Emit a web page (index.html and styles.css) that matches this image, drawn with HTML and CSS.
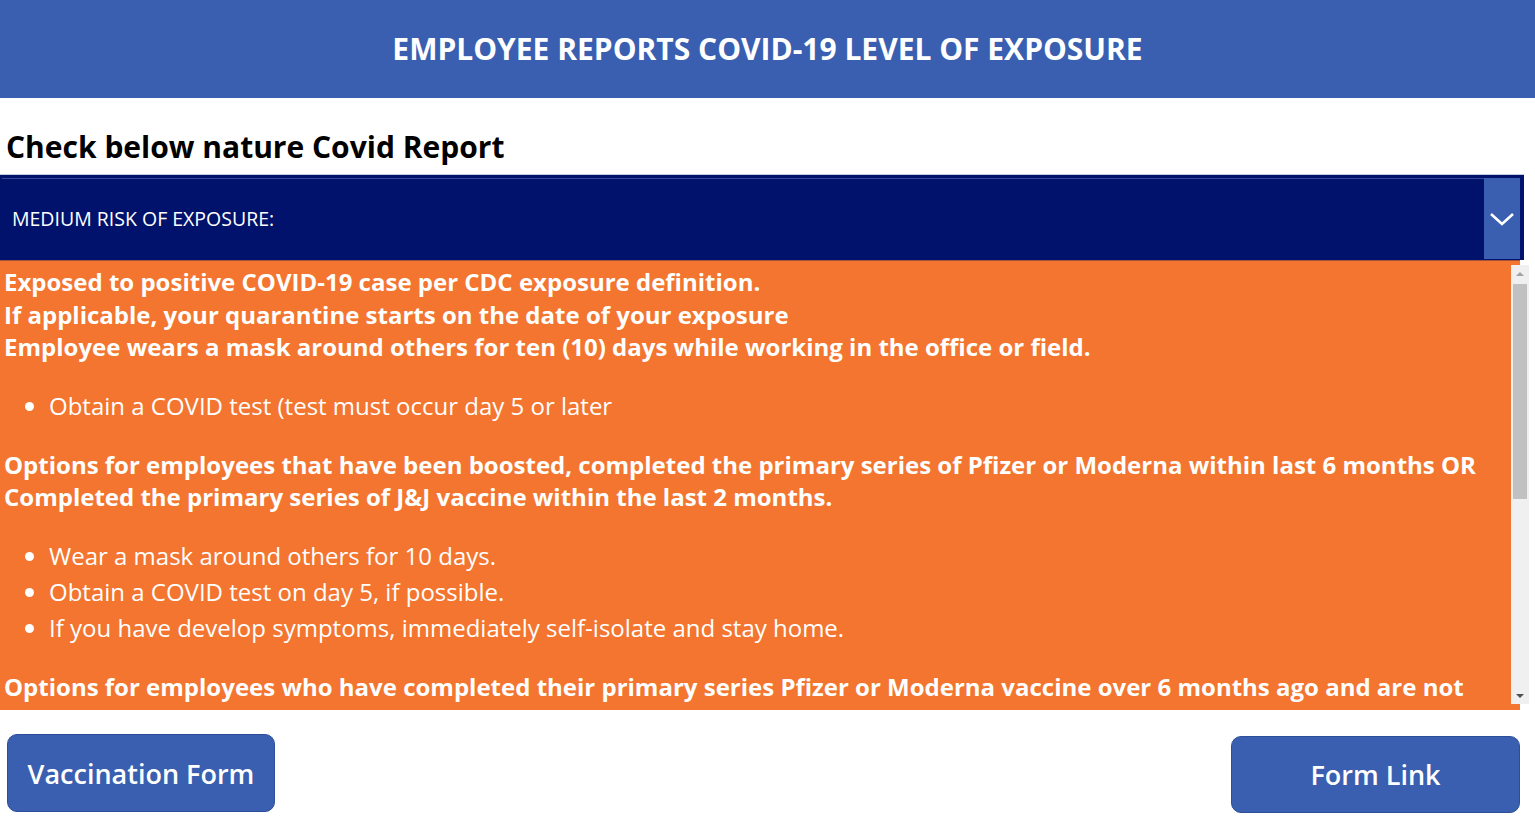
FILE: index.html
```html
<!DOCTYPE html>
<html lang="en">
<head>
<meta charset="utf-8">
<title>Employee Reports COVID-19 Level of Exposure</title>
<link rel="stylesheet" href="styles.css">
</head>
<body>
<header class="topbar">
  <h1 class="topbar-title">EMPLOYEE REPORTS COVID-19 LEVEL OF EXPOSURE</h1>
</header>
<main class="main">
  <h2 class="section-title">Check below nature Covid Report</h2>
  <div class="dropdown">
    <div class="dd-inner">
      <span class="dd-label">MEDIUM RISK OF EXPOSURE:</span>
    </div>
    <div class="dd-chevron">
      <svg width="26" height="16" viewBox="0 0 26 16"><path d="M2 3 L13 13 L24 3" fill="none" stroke="#fff" stroke-width="2.6"/></svg>
    </div>
  </div>
  <div class="panel">
    <div class="panel-content">
      <p class="bold">Exposed to positive COVID-19 case per CDC exposure definition.<br>If applicable, your quarantine starts on the date of your exposure<br>Employee wears a mask around others for ten (10) days while working in the office or field.</p>
      <ul class="list">
        <li>Obtain a COVID test (test must occur day 5 or later</li>
      </ul>
      <p class="bold">Options for employees that have been boosted, completed the primary series of Pfizer or Moderna within last 6 months OR<br>Completed the primary series of J&amp;J vaccine within the last 2 months.</p>
      <ul class="list">
        <li>Wear a mask around others for 10 days.</li>
        <li>Obtain a COVID test on day 5, if possible.</li>
        <li>If you have develop symptoms, immediately self-isolate and stay home.</li>
      </ul>
      <p class="bold">Options for employees who have completed their primary series Pfizer or Moderna vaccine over 6 months ago and are not<br>boosted or completed the primary series of J&amp;J over 2 months ago and are not boosted, or are unvaccinated.</p>
    </div>
    <div class="scrollbar">
      <div class="sb-btn"><span class="tri-up"></span></div>
      <div class="sb-track"><div class="sb-thumb"></div></div>
      <div class="sb-btn"><span class="tri-down"></span></div>
    </div>
  </div>
  <div class="actions">
    <button class="btn btn-left">Vaccination Form</button>
    <button class="btn btn-right">Form Link</button>
  </div>
</main>
</body>
</html>
```

FILE: styles.css
```css
* { box-sizing: border-box; }
html, body { margin: 0; padding: 0; }
body {
  width: 1535px;
  height: 830px;
  overflow: hidden;
  background: #fff;
  font-family: "Open Sans", "Noto Sans", sans-serif;
  color: #000;
}
.topbar {
  height: 98px;
  background: #3a5fb0;
  display: flex;
  align-items: center;
  justify-content: center;
}
.topbar-title {
  margin: 0;
  color: #fff;
  font-size: 30px;
  font-weight: 700;
  line-height: 40px;
}
.main { display: flex; flex-direction: column; }
.section-title {
  margin: 0;
  height: 76px;
  padding: 29px 0 0 6px;
  font-size: 30px;
  font-weight: 700;
  line-height: 40px;
}
.dropdown {
  width: 1524px;
  height: 86px;
  background: #00126b;
  border-top: 1px solid #c3c9df;
  display: flex;
  padding: 3px 4px 1px 0;
}
.dd-inner {
  flex: 1;
  display: flex;
  align-items: center;
  padding-left: 10px;
  border-top: 1px solid #35489a;
  margin-left: 2px;
}
.dd-label {
  color: #fff;
  font-size: 19.5px;
  margin-top: -2px;
}
.dd-chevron {
  width: 36px;
  background: #3a5fb0;
  display: flex;
  align-items: center;
  justify-content: center;
}
.panel {
  position: relative;
  width: 1520px;
  height: 450px;
  background: #f3752f;
  border-top: 1px solid #a4533a;
}
.panel-content {
  height: 444px;
  overflow: hidden;
  padding: 5px 30px 0 4px;
  color: #fff;
  font-size: 24px;
}
.bold {
  margin: 0;
  font-weight: 700;
  line-height: 32.5px;
}
.list {
  margin: 24px 0 25px 0;
  padding-left: 45px;
  line-height: 36px;
}
.scrollbar {
  position: absolute;
  top: 4px;
  right: -9px;
  width: 18px;
  bottom: 6px;
  background: #f0f0f0;
  display: flex;
  flex-direction: column;
}
.sb-btn {
  height: 17px;
  display: flex;
  align-items: center;
  justify-content: center;
}
.tri-up {
  width: 0; height: 0;
  border-left: 4px solid transparent;
  border-right: 4px solid transparent;
  border-bottom: 4px solid #a3a3a3;
}
.tri-down {
  width: 0; height: 0;
  border-left: 4px solid transparent;
  border-right: 4px solid transparent;
  border-top: 4px solid #505050;
}
.sb-track { flex: 1; padding: 2px 2px 0 2px; }
.sb-thumb {
  height: 215px;
  background: #c1c1c1;
}
.actions {
  display: flex;
  justify-content: space-between;
  align-items: flex-start;
  padding: 24px 15px 0 7px;
}
.btn {
  font-family: "Open Sans", "Noto Sans", sans-serif;
  font-size: 27px;
  font-weight: 600;
  color: #fff;
  background: #3a5fb0;
  border: 1px solid #2d4e98;
  border-radius: 10px;
  cursor: pointer;
}
.btn-left { width: 268px; height: 78px; }
.btn-right { width: 289px; height: 77px; margin-top: 2px; }
```
